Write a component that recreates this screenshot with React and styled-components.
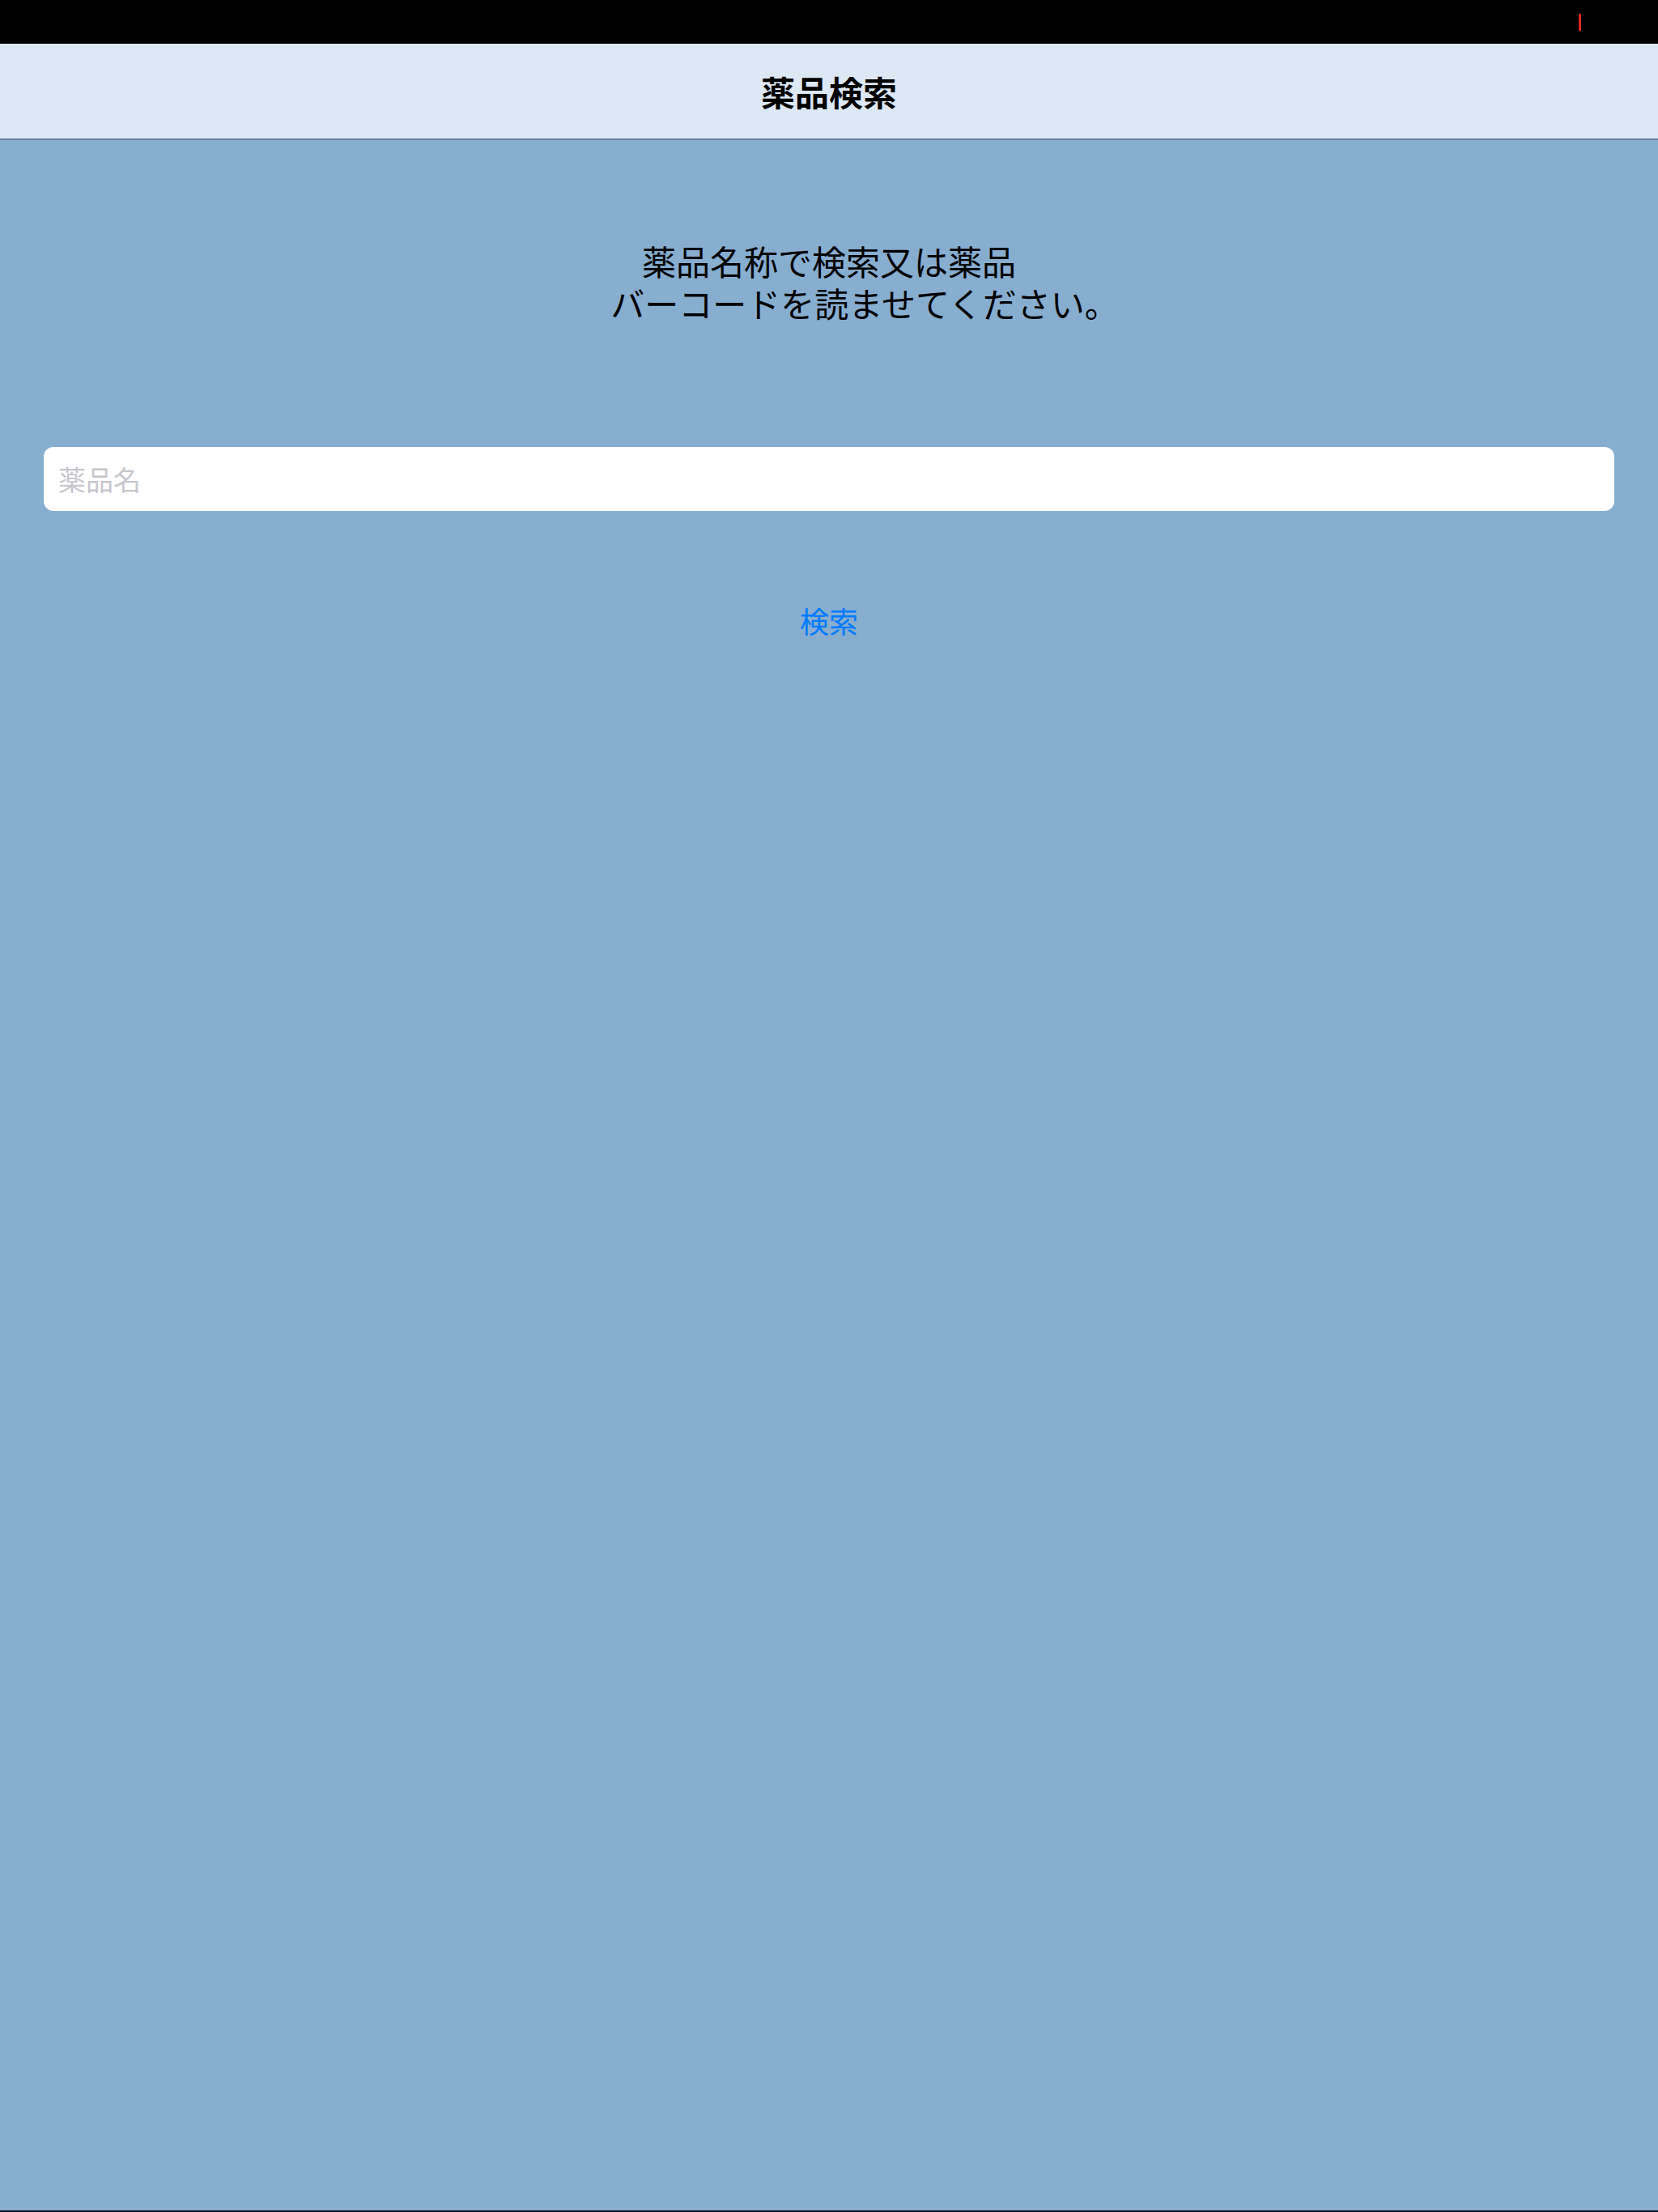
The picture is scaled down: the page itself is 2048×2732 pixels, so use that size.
import React, { useState } from 'react'
import styled, { createGlobalStyle } from 'styled-components'

const GlobalStyle = createGlobalStyle`
  * {
    padding: 0;
    margin: 0;
    box-sizing: border-box;
  }
  body {
    font-family: "Noto Sans CJK JP", "Noto Sans", sans-serif;
    background: #87adcf;
  }
`

const Screen = styled.div`
  height: 100vh;
  min-height: 2732px;
  display: flex;
  flex-direction: column;
  background: #87adcf;
  border-bottom: 2px solid #0d1528;
`

const StatusBar = styled.div`
  height: 54px;
  background: #000;
  display: flex;
  justify-content: flex-end;
  align-items: flex-start;
  padding: 17px 95px 0 0;
`

const Tick = styled.span`
  width: 3px;
  height: 21px;
  background: #e0261c;
`

const NavBar = styled.header`
  height: 119px;
  background: #dde8f5;
  border-bottom: 2px solid #6b7f99;
  display: flex;
  align-items: center;
  justify-content: center;
`

const Title = styled.h1`
  font-size: 42px;
  font-weight: 700;
  color: #000;
  letter-spacing: 0;
`

const Main = styled.main`
  flex: 1;
  display: flex;
  flex-direction: column;
  align-items: center;
  padding: 123px 54px 0;
`

const Message = styled.div`
  display: flex;
  flex-direction: column;
  align-items: center;
  color: #000;
  font-size: 42px;
  line-height: 52px;
`

const Line = styled.p`
  margin-left: ${p => p.$shift || 0}px;
  white-space: nowrap;
`

const SearchInput = styled.input`
  margin-top: 152px;
  width: 100%;
  height: 79px;
  border: none;
  border-radius: 12px;
  background: #fff;
  padding: 0 18px;
  font-family: inherit;
  font-size: 34px;
  color: #000;
  outline: none;
  &::placeholder {
    color: #c7c7cd;
  }
`

const SearchButton = styled.button`
  margin-top: 109px;
  background: none;
  border: none;
  font-family: inherit;
  font-size: 36px;
  color: #007aff;
  cursor: pointer;
`

export default function App() {
  const [name, setName] = useState('')

  return (
    <Screen>
      <GlobalStyle />
      <StatusBar>
        <Tick />
      </StatusBar>
      <NavBar>
        <Title>薬品検索</Title>
      </NavBar>
      <Main>
        <Message>
          <Line>薬品名称で検索又は薬品</Line>
          <Line $shift={88}>バーコードを読ませてください。</Line>
        </Message>
        <SearchInput
          value={name}
          onChange={e => setName(e.target.value)}
          placeholder="薬品名"
        />
        <SearchButton>検索</SearchButton>
      </Main>
    </Screen>
  )
}
